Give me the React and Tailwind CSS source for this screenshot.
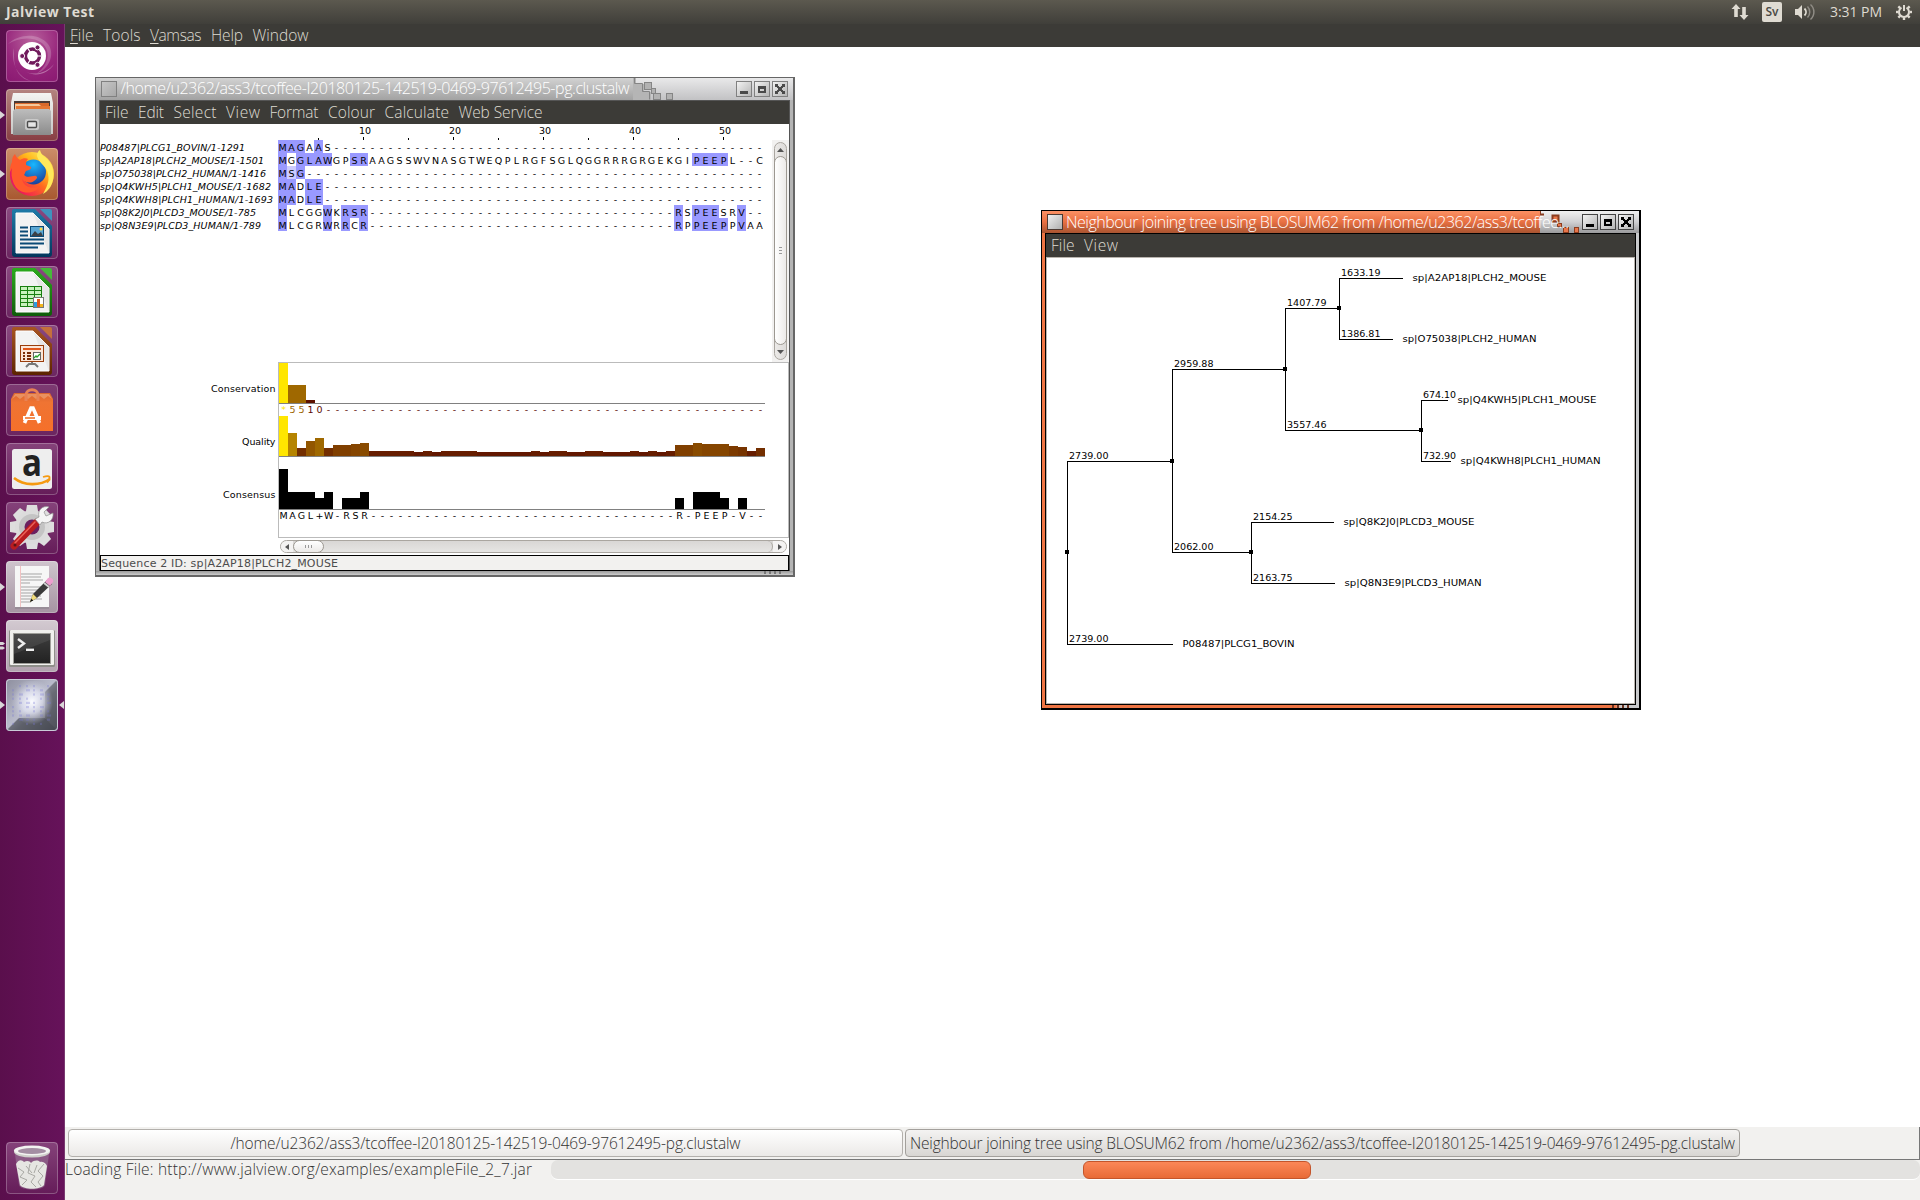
import React, { useLayoutEffect, useRef, useState } from "react";

/* Text spread evenly over a fixed width. */
function Fit({ w, className = "", children }) {
  const ref = useRef(null);
  const [ls, setLs] = useState(0);
  useLayoutEffect(() => {
    const el = ref.current;
    const n = el.textContent.length;
    const natural = el.getBoundingClientRect().width - ls * n;
    setLs((w - natural) / (n - 1 || 1));
  }, [w]);
  return (
    <span className={`block shrink-0 whitespace-pre ${className}`} style={{ width: w }}>
      <span ref={ref} className="inline-block" style={{ letterSpacing: ls }}>
        {children}
      </span>
    </span>
  );
}

const UI = "font-['Open_Sans','Noto_Sans',sans-serif]";
const DV = "font-['DejaVu_Sans',sans-serif]";

/* ---------- launcher ---------- */

function Dash() {
  return (
    <>
      <defs>
        <radialGradient id="dash" cx="0.5" cy="0.2" r="0.9">
          <stop offset="0" stopColor="#b8619c" />
          <stop offset="0.6" stopColor="#97267c" />
          <stop offset="1" stopColor="#8b1a72" />
        </radialGradient>
      </defs>
      <rect x="0.5" y="0.5" width="51" height="51" rx="3" fill="url(#dash)" />
      <path d="M2 14C12 4 32 2 42 14C50 25 42 40 30 44C42 36 46 22 36 13C26 6 12 8 2 14Z" fill="#fff" opacity="0.2" />
      <path d="M8 18C4 32 12 48 26 51C14 50 8 40 8 26Z" fill="#fff" opacity="0.22" />
      <path d="M48 34C42 44 30 47 20 42C30 46 42 42 48 34Z" fill="#fff" opacity="0.35" />
      <circle cx="26" cy="26" r="14" fill="#fff" />
      <circle cx="26.5" cy="26" r="7" fill="none" stroke="#701a5c" strokeWidth="3.4" />
      <path d="M26.5 26L35 26M26.5 26L22 18.5M26.5 26L22 33.5" stroke="#fff" strokeWidth="1.2" />
      <circle cx="26.5" cy="26" r="4.8" fill="#fff" />
      <g fill="#701a5c" stroke="#fff" strokeWidth="0.9">
        <circle cx="16.2" cy="26" r="2.5" />
        <circle cx="31.5" cy="17.4" r="2.5" />
        <circle cx="31.5" cy="34.8" r="2.5" />
      </g>
    </>
  );
}

function Files() {
  return (
    <>
      <defs>
        <linearGradient id="cab" x1="0" y1="0" x2="0" y2="1">
          <stop offset="0" stopColor="#bdbdbd" />
          <stop offset="1" stopColor="#8b8b8b" />
        </linearGradient>
        <linearGradient id="cabTop" x1="0" y1="0" x2="0" y2="1">
          <stop offset="0" stopColor="#f4f4f2" />
          <stop offset="1" stopColor="#c6c6c4" />
        </linearGradient>
      </defs>
      <path d="M7 4h38l2 10v31H5V14z" fill="url(#cabTop)" />
      <path d="M8 12h36v10H8z" fill="#4b3a35" />
      <path d="M9 14h34v8H9z" fill="#d9692c" />
      <path d="M9 15h24l2 2h8v5H9z" fill="#f6c89b" />
      <path d="M10 17h34v5H10z" fill="#e57835" />
      <path d="M7 22L9 20h34l2 2v24H7z" fill="url(#cab)" />
      <rect x="19" y="30" width="14" height="11" rx="2" fill="#c9c9c9" />
      <rect x="21.5" y="32.5" width="9" height="6" rx="1" fill="#e5e5e5" stroke="#4c4c4c" strokeWidth="1.4" />
    </>
  );
}

function Firefox() {
  return (
    <>
      <defs>
        <linearGradient id="fox" x1="0.9" y1="0" x2="0.15" y2="0.9">
          <stop offset="0" stopColor="#fff36a" />
          <stop offset="0.35" stopColor="#ffb81c" />
          <stop offset="0.6" stopColor="#ff6a1f" />
          <stop offset="1" stopColor="#f0155a" />
        </linearGradient>
        <radialGradient id="globe" cx="0.5" cy="0.2" r="0.8">
          <stop offset="0" stopColor="#18b8ff" />
          <stop offset="1" stopColor="#1c3f9b" />
        </radialGradient>
      </defs>
      <circle cx="26" cy="26" r="22" fill="url(#fox)" />
      <circle cx="27.5" cy="24" r="12.5" fill="url(#globe)" />
      <path d="M31 8C31 5 32 3 34 2C35 8 41 9 45 16C50 26 48 40 37 46C40 40 44 34 42 26C41 18 33 16 31 8Z" fill="#ffe95a" />
      <path d="M6 14C6 10 7 8 9 6C10 9 12 11 14 12C17 10 20 10 22 11C20 13 20 15 20 17L25 19C25 21 24 22 20 23C19 24 19 26 18 27C22 31 27 27 30 28C32 29 31 31 28 33C24 36 18 34 16 31C17 38 25 42 34 38C30 46 14 48 7 36C3 28 3 20 6 14Z" fill="#ff5a2c" />
      <path d="M6 20C4 30 8 42 20 47C9 44 3 34 4 24Z" fill="#e41b62" />
    </>
  );
}

function OfficeDoc({ dark, main, light, id, children }) {
  return (
    <>
      <defs>
        <linearGradient id={id} x1="0" y1="0" x2="0" y2="1">
          <stop offset="0" stopColor={main} />
          <stop offset="1" stopColor={dark} />
        </linearGradient>
      </defs>
      <path d="M8 2H29L46 19V47a3 3 0 0 1-3 3H9a3 3 0 0 1-3-3V4a2 2 0 0 1 2-2z" fill={`url(#${id})`} />
      <path d="M34 2H44a2 2 0 0 1 2 2V14z" fill={light} />
      <path d="M10 6H27L43 22V46H10z" fill="#f3f3f3" stroke="#fff" strokeWidth="1" />
      <path d="M27 6L43 22V46L36 28z" fill="#dfdfdf" opacity="0.6" />
      {children}
    </>
  );
}

function Writer() {
  return (
    <OfficeDoc id="wr" main="#1f7ba8" dark="#02365c" light="#3f93bd">
      <path d="M14 20.5h8M14 24.5h8M14 28.5h8M14 32.5h24M14 36.5h24M14 40.5h18" stroke="#0b4a76" strokeWidth="2" />
      <rect x="24.5" y="19.5" width="13" height="10" fill="#5aa7d4" stroke="#0b4a76" />
      <path d="M25 29L29 24L32 27L35 25L37 29z" fill="#3b4046" />
      <circle cx="35" cy="22" r="1.5" fill="#ffd640" />
    </OfficeDoc>
  );
}

function Calc() {
  return (
    <OfficeDoc id="ca" main="#2cab1d" dark="#0f5c0a" light="#46b93a">
      <rect x="14.5" y="20.5" width="21" height="20" fill="#c8f2bd" stroke="#187f10" />
      <path d="M14 24.5h22M14 28.5h22M14 32.5h22M14 36.5h22M21.5 20v21M28.5 20v21" stroke="#187f10" />
      <rect x="27.5" y="31.5" width="10" height="10" fill="#fff" stroke="#777" />
      <path d="M28 36h3v5h-3z" fill="#2d9be0" />
      <path d="M31 33h3v8h-3z" fill="#e0571b" />
      <path d="M34 38h3v3h-3z" fill="#f2b51c" />
    </OfficeDoc>
  );
}

function Impress() {
  return (
    <OfficeDoc id="im" main="#a85522" dark="#5c2400" light="#c4703c">
      <rect x="14.5" y="20.5" width="23" height="16" fill="#fbe6d8" stroke="#9a3e0c" />
      <path d="M17 24h18" stroke="#e0571b" strokeWidth="2" />
      <path d="M17 28h2M17 31h2M17 34h2M21 28h4M21 31h4M21 34h4" stroke="#7a2e08" strokeWidth="2" />
      <rect x="27.5" y="27.5" width="7" height="7" fill="#fff" stroke="#666" />
      <path d="M28 33l2-2 1 1 3-3" stroke="#2ba02b" fill="none" strokeWidth="1.3" />
      <path d="M26 37v2M20 42l3-3h6l3 3" stroke="#777" fill="none" strokeWidth="2" />
    </OfficeDoc>
  );
}

function Software() {
  return (
    <>
      <defs>
        <linearGradient id="bag" x1="0" y1="0" x2="0" y2="1">
          <stop offset="0" stopColor="#d9662f" />
          <stop offset="0.25" stopColor="#ef7433" />
          <stop offset="1" stopColor="#f5702a" />
        </linearGradient>
      </defs>
      <path d="M8 9h36l3 6v32H5V15z" fill="url(#bag)" />
      <path d="M6 15L9 10h34l3 5-4-3-4 3-4-3-4 3-4-3-4 3-4-3-4 3-4-3z" fill="#e9915f" />
      <path d="M20 17v-6c0-7 12-7 12 0v6" fill="none" stroke="#e88255" strokeWidth="3" />
      <path d="M18.5 39L25 24h2L33.500 39" fill="none" stroke="#fff" strokeWidth="3.6" />
      <path d="M17 34h18" stroke="#fff" strokeWidth="4" />
      <path d="M19 34h10" stroke="#f0762f" strokeWidth="1.6" />
    </>
  );
}

function Amazon() {
  return (
    <>
      <rect x="6" y="6" width="40" height="40" rx="2.5" fill="#eeeeee" />
      <text x="26" y="33" textAnchor="middle" fontSize="37" fontWeight="700" fontFamily="Open Sans, sans-serif" fill="#222" textLength="20" lengthAdjust="spacingAndGlyphs">
        a
      </text>
      <path d="M8 35C18 43 34 43 44 36" fill="none" stroke="#f59a12" strokeWidth="2.6" />
      <path d="M37 34c3-1 6-1 6.5 0 0.5 1.5-1 4-2.5 5.5" fill="none" stroke="#f59a12" strokeWidth="1.8" />
    </>
  );
}

function Settings() {
  return (
    <>
      <g transform="translate(26 25)">
        {[0, 45, 90, 135].map((a) => (
          <path key={a} d="M-5 -22h10l1 6v32l-1 6h-10l-1-6v-32z" fill="#dedede" transform={`rotate(${a})`} />
        ))}
        <circle r="17" fill="#dcdcdc" />
        <circle r="13" fill="#c4c4c4" />
        <circle r="7.5" fill="#6b2160" />
      </g>
      <path d="M8 44L31 20" stroke="#b81c20" strokeWidth="7" strokeLinecap="round" />
      <path d="M9 41L29 20" stroke="#ea6258" strokeWidth="1.5" strokeLinecap="round" />
      <path d="M29 17L33 15C31 8 37 3 43 5L38 10L40 14L47 11C48 18 42 23 36 20L34 23z" fill="#f5f5f5" stroke="#8f8f8f" strokeWidth="0.7" />
      <circle cx="9" cy="43" r="1.5" fill="#5b1414" />
    </>
  );
}

function Editor() {
  return (
    <>
      <rect x="9" y="7" width="34" height="41" fill="#8e868d" opacity="0.6" />
      <rect x="9" y="5" width="34" height="41" fill="#f6f6f6" />
      <path d="M14.5 5v41" stroke="#f0b5b5" strokeWidth="0.8" />
      <path d="M15 13h21M15 16h20M15 19h22M15 22h9M15 26h22M15 29h21M15 32h18M15 35h20M15 38h21M15 41h10" stroke="#a5a5a5" strokeWidth="1" />
      <path d="M24 41L27 33L41 19L46 23L31 37z" fill="#3a3a3a" />
      <path d="M24 41L27 33L31 37z" fill="#f0dc7a" />
      <path d="M24 41L25.3 37.8L27.3 39.5z" fill="#111" />
      <path d="M39 21L42 17C45 16 48 18 47 21L44 25z" fill="#ee9fd0" />
      <path d="M38 22L43 26" stroke="#cfcfcf" strokeWidth="2" />
    </>
  );
}

function Terminal() {
  return (
    <>
      <defs>
        <linearGradient id="scr" x1="0" y1="0" x2="0" y2="1">
          <stop offset="0" stopColor="#3e3e3e" />
          <stop offset="1" stopColor="#222222" />
        </linearGradient>
      </defs>
      <rect x="3" y="10" width="46" height="37" rx="1.5" fill="#8f8f8a" />
      <rect x="4" y="10" width="44" height="35" rx="1" fill="#f1f1ee" />
      <rect x="7" y="13" width="38" height="31" fill="#9e9e99" />
      <rect x="8" y="14" width="36" height="29" fill="url(#scr)" />
      <path d="M8 14h36v6L8 34z" fill="#fff" opacity="0.08" />
      <path d="M12 19l6 4.5l-6 4.5" fill="none" stroke="#eee" strokeWidth="2.4" />
      <path d="M20 29.8h8" stroke="#eee" strokeWidth="2.4" />
    </>
  );
}

function Jalview() {
  const marks = [];
  for (let r = 0; r < 10; r++)
    for (let c = 0; c < 6; c++) if ((r * 5 + c * 7) % 4 !== 0) marks.push([6 + c * 7, 6 + r * 4.2, (r * c) % 3]);
  return (
    <>
      <defs>
        <linearGradient id="jvBase" x1="0" y1="0" x2="1" y2="1">
          <stop offset="0" stopColor="#8f90a0" />
          <stop offset="0.48" stopColor="#b9bbcb" />
          <stop offset="0.6" stopColor="#8b8c98" />
          <stop offset="1" stopColor="#50525c" />
        </linearGradient>
        <radialGradient id="jv" cx="0.5" cy="0.45" r="0.5">
          <stop offset="0" stopColor="#fbfcff" />
          <stop offset="0.5" stopColor="#e4e6f5" stopOpacity="0.75" />
          <stop offset="1" stopColor="#c5c8da" stopOpacity="0" />
        </radialGradient>
      </defs>
      <rect x="1" y="1" width="50" height="50" rx="2" fill="url(#jvBase)" />
      <path d="M51 1V51L39 39V13z" fill="#4c4e58" opacity="0.55" />
      <path d="M1 51H51L39 39H13z" fill="#3f434b" opacity="0.6" />
      <rect x="5" y="2" width="42" height="46" fill="url(#jv)" />
      {marks.map(([x, y, k], i) => (
        <rect key={i} x={x} y={y} width={2 + k} height="2.2" fill="#7676d4" opacity="0.3" />
      ))}
      <rect x="0.5" y="0.5" width="51" height="51" rx="3" fill="none" stroke="#b9bacb" />
    </>
  );
}

function Trash() {
  return (
    <>
      <path d="M9 12L13 43C14 49 38 49 39 43L43 12z" fill="#9a7a99" opacity="0.55" />
      <path d="M10 22c3-5 6-4 8-2 3-2 6-1 7 1 3-3 7-3 9-1 4-1 6 2 7 4l-3 19c-4 5-20 5-24 0z" fill="#e6e6e2" />
      <path d="M12 26l6 4-4 5 7 3-5 5M24 22l-2 9 7 3-4 6 5 5M38 22l-6 7 5 5-5 6 3 4M20 24l6 7M31 23l-3 8" stroke="#a9a9a4" fill="none" strokeWidth="1" />
      <ellipse cx="26" cy="10" rx="18" ry="5.5" fill="#cfcfcb" />
      <ellipse cx="26" cy="8.5" rx="18" ry="5" fill="#f3f3f1" />
      <ellipse cx="26" cy="9" rx="14" ry="3" fill="#a48ea3" />
    </>
  );
}

const LAUNCH = [
  { I: Dash, bg: "bg-[#8f2178]" },
  { I: Files, bg: "bg-linear-to-b from-[#b48480] to-[#873d43]", left: 1 },
  { I: Firefox, bg: "bg-linear-to-b from-[#cb8d69] to-[#a8582f]", left: 1 },
  { I: Writer, bg: "bg-linear-to-b from-[#8a4a80] to-[#6b2560]" },
  { I: Calc, bg: "bg-linear-to-b from-[#8a4a80] to-[#6b2560]" },
  { I: Impress, bg: "bg-linear-to-b from-[#8a4a80] to-[#6b2560]" },
  { I: Software, bg: "bg-linear-to-b from-[#7d3a72] to-[#6b2560]" },
  { I: Amazon, bg: "bg-linear-to-b from-[#85427a] to-[#651c59]" },
  { I: Settings, bg: "bg-linear-to-b from-[#85427a] to-[#651c59]" },
  { I: Editor, bg: "bg-linear-to-b from-[#cfc4cd] to-[#a594a2]", left: 1 },
  { I: Terminal, bg: "bg-linear-to-b from-[#d3cad1] to-[#b1a2ae]", left: 2 },
  { I: Jalview, bg: "bg-[#8c8ea0]", left: 1, right: 1 },
];

function Tile({ I, bg, left, right }) {
  return (
    <div className={`relative h-[52px] w-[52px] rounded-[4px] ${bg}`}>
      <svg className="absolute inset-0 overflow-visible" width="52" height="52" viewBox="0 0 52 52">
        <I />
      </svg>
      <div className="absolute inset-0 rounded-[4px] border border-white/25" />
      {left === 1 && (
        <svg className="absolute top-[22px] left-[-6px]" width="5" height="8">
          <path d="M0 0L5 4L0 8z" fill="#d9d6d8" />
        </svg>
      )}
      {left === 2 && (
        <svg className="absolute top-[22px] left-[-6px]" width="5" height="8">
          <path d="M0 0h3l2 1.500L3 3H0zM0 4.500h3l2 1.500L3 7.500H0z" fill="#d9d6d8" />
        </svg>
      )}
      {right === 1 && (
        <svg className="absolute top-[22px] left-[53px]" width="5" height="8">
          <path d="M5 0L0 4L5 8z" fill="#d9d6d8" />
        </svg>
      )}
    </div>
  );
}

/* ---------- window parts ---------- */

function MenuItems({ items }) {
  return (
    <div className={`flex gap-[9.5px] text-[15.5px] leading-[20px] font-light text-[#dfdbd2] ${UI}`}>
      {items.map(([t, w, u]) => (
        <Fit key={t} w={w}>
          {u ? (
            <>
              <span className="underline decoration-1 underline-offset-[2px]">{t[0]}</span>
              {t.slice(1)}
            </>
          ) : (
            t
          )}
        </Fit>
      ))}
    </div>
  );
}

function WinButtons({ active }) {
  const ink = active ? "#000" : "#4a4a4a";
  const glyphs = [
    <rect key="a" x="4" y="10" width="8" height="3" fill={ink} />,
    <path key="b" d="M4 5h8v7H4zM6 8v2h4V8z" fill={ink} fillRule="evenodd" />,
    <path key="c" d="M3 3h3v2h1v1h2V5h1V3h3v3h-2v1h-1v2h1v1h2v3h-3v-2H9v-1H7v1H6v2H3v-3h2V9h1V7H5V6H3z" fill={ink} />,
  ];
  return (
    <div className="flex gap-[2px]">
      {glyphs.map((g, i) => (
        <div
          key={i}
          className={`h-4 w-4 border bg-linear-to-br from-[#f2f2f2] to-[#b5b5b5] ${active ? "border-[#444]" : "border-[#808080]"}`}
        >
          <svg className="-mt-px -ml-px" width="16" height="16">
            {g}
          </svg>
        </div>
      ))}
    </div>
  );
}

/* ---------- alignment ---------- */

const rep = (n) => "-".repeat(n);
const SEQS = [
  ["P08487|PLCG1_BOVIN/1-1291", 145, "MAGAAS" + rep(48), [0, 1, 2, 4]],
  ["sp|A2AP18|PLCH2_MOUSE/1-1501", 164, "MGGLAWGPSRAAGSSWVNASGTWEQPLRGFSGLQGGRRRGRGEKGIPEEPL--C", [0, 2, 3, 4, 5, 8, 9, 46, 47, 48, 49]],
  ["sp|O75038|PLCH2_HUMAN/1-1416", 166, "MSG" + rep(51), [0, 2]],
  ["sp|Q4KWH5|PLCH1_MOUSE/1-1682", 171, "MADLE" + rep(49), [0, 1, 3, 4]],
  ["sp|Q4KWH8|PLCH1_HUMAN/1-1693", 173, "MADLE" + rep(49), [0, 1, 3, 4]],
  ["sp|Q8K2J0|PLCD3_MOUSE/1-785", 156, "MLCGGWKRSR" + rep(34) + "RSPEESRV--", [0, 5, 7, 8, 9, 44, 46, 47, 48, 51]],
  ["sp|Q8N3E9|PLCD3_HUMAN/1-789", 161, "MLCGRWRRCR" + rep(34) + "RPPEEPPVAA", [0, 5, 7, 9, 44, 46, 47, 48, 49, 51]],
];

function Residues({ seq, marked = [], soft = -1, color, lead = "leading-[16px]" }) {
  return (
    <div className="flex">
      {[...seq].map((ch, i) => (
        <span
          key={i}
          className={`block h-[13px] w-[9px] text-center text-[9.5px] ${lead} ${
            marked.includes(i) ? "bg-[#9999ff]" : i === soft ? "bg-[#ccccff]" : ""
          }`}
          style={color ? { color: color(i) } : undefined}
        >
          {ch}
        </span>
      ))}
    </div>
  );
}

const heat = (h) => {
  const f = h / 40;
  return `rgb(${Math.round(80 + 175 * f)},${Math.round(230 * f)},0)`;
};
const CONS = [40, 18, 18, 3];
const QUAL = [
  40, 23, 8, 15, 18, 8, 11, 11, 12, 13, 5, 5, 5, 5, 5, 4, 5, 4, 5, 5, 5, 5, 4, 4, 4, 4, 4, 4, 5, 4, 5, 5, 4, 4, 5, 5, 4, 4, 4, 5, 4, 5, 4, 5,
  11, 11, 13, 12, 12, 12, 10, 9, 5, 8,
];
const OCC = [40, 17, 17, 17, 11, 17, 0, 11, 11, 17, ...Array(34).fill(0), 11, 0, 17, 17, 17, 11, 0, 11, 0, 0];

function Bars({ data, mono }) {
  return (
    <div className="flex h-[41px] w-[486px] items-end border-b border-[#808080]">
      {data.map((h, i) => (
        <div key={i} className="w-[9px]" style={{ height: h, backgroundColor: mono ? "#000" : heat(h) }} />
      ))}
    </div>
  );
}

function AlignmentWindow() {
  return (
    <div className="absolute top-[30px] left-[30px] flex h-[500px] w-[700px] flex-col border-t border-r-2 border-b-2 border-l border-[#666] bg-[#b4b4b4]">
      <div className="relative flex h-[22px] shrink-0 items-center bg-linear-to-b from-[#d2d2d2] to-[#a2a2a2] pr-[5px] pl-[5px]">
        <div className="absolute top-0 right-0 h-[22px] w-[160px] bg-linear-to-b from-[#e9e9ea] to-[#c2c2c4]" />
        <svg className="absolute top-0 left-[537px]" width="48" height="22">
          <path d="M0 0v22h18v-8h-7V6H3V0z" fill="#b5b5b5" />
          <g fill="#b2b2b2" stroke="#858585">
            <path d="M1.500 0v5.500h8v8h7v8" fill="none" />
            <rect x="11.500" y="4.500" width="7" height="7" />
            <rect x="18.500" y="10.500" width="4" height="5" />
            <rect x="20.500" y="15.500" width="7" height="6" />
            <rect x="33.500" y="15.500" width="6" height="6" />
          </g>
        </svg>
        <div className="h-4 w-4 border border-[#808080] bg-linear-to-br from-[#c6c6c6] to-[#a8a8a8]" />
        <Fit w={509} className={`relative -top-px ml-[3.500px] text-[16px] leading-[20px] font-light text-white ${UI}`}>
          /home/u2362/ass3/tcoffee-I20180125-142519-0469-97612495-pg.clustalw
        </Fit>
        <div className="relative ml-auto">
          <WinButtons />
        </div>
      </div>
      <div className="mr-[3px] ml-[3px] flex min-h-0 flex-1 flex-col border-t border-r border-l border-[#555] bg-white">
        <div className="flex h-[23px] shrink-0 items-center bg-[#3c3b37] pb-[2px] pl-[5px]">
          <MenuItems
            items={[
              ["File", 23.5],
              ["Edit", 26],
              ["Select", 43],
              ["View", 34],
              ["Format", 49],
              ["Colour", 47],
              ["Calculate", 64.5],
              ["Web Service", 84],
            ]}
          />
        </div>
        <div className={`flex min-h-0 flex-1 flex-col text-black ${DV}`}>
          {/* ruler */}
          <div className="flex h-[16px] shrink-0 pl-[178px] text-[9.500px] leading-[13px]">
            {Array.from({ length: 54 }, (_, i) => (
              <div key={i} className="flex w-[9px] flex-col justify-between">
                <span className="h-[12px] w-0 whitespace-nowrap">{(i + 1) % 10 === 0 ? i + 1 : ""}</span>
                {(i + 1) % 5 === 0 && <span className={`ml-[4px] w-px bg-black ${(i + 1) % 10 === 0 ? "h-[3px]" : "h-[2px]"}`} />}
              </div>
            ))}
          </div>
          <div className="flex h-[222px] shrink-0">
            <div className="w-[178px] italic">
              {SEQS.map(([id, w]) => (
                <Fit key={id} w={w} className="h-[13px] text-[9.500px] leading-[16px]">
                  {id}
                </Fit>
              ))}
            </div>
            <div>
              {SEQS.map(([id, , seq, marked], r) => (
                <Residues key={id} seq={seq} marked={marked} soft={r === 2 ? 1 : -1} />
              ))}
            </div>
            <div className="ml-auto w-[17px] bg-[#f2f1f0] px-[2px] pt-[2px]">
              <div className="flex h-[218px] flex-col rounded-[7px] border border-[#aaa6a0] bg-linear-to-r from-[#eceae8] to-[#dddbd9]">
                <div className="flex h-[13px] items-center justify-center">
                  <svg width="7" height="4">
                    <path d="M3.500 0L7 4H0z" fill="#555" />
                  </svg>
                </div>
                <div className="-mx-px flex flex-1 flex-col items-center justify-center gap-[2px] rounded-[7px] border border-[#9c9891] bg-linear-to-r from-white to-[#eceae8]">
                  <span className="h-px w-[3px] bg-[#999]" />
                  <span className="h-px w-[3px] bg-[#999]" />
                  <span className="h-px w-[3px] bg-[#999]" />
                </div>
                <div className="flex h-[14px] items-center justify-center">
                  <svg width="7" height="4">
                    <path d="M0 0H7L3.500 4z" fill="#555" />
                  </svg>
                </div>
              </div>
            </div>
          </div>
          {/* annotation */}
          <div className="flex h-[176px] shrink-0">
            <div className="flex w-[178px] flex-col items-end pr-[2.500px] text-[9.500px] leading-[12px]">
              <Fit w={64.5} className="mt-[21px] h-[53px]">Conservation</Fit>
              <Fit w={33.5} className="h-[53px]">Quality</Fit>
              <Fit w={52.5}>Consensus</Fit>
            </div>
            <div className="w-[511px] border border-[#bbb]">
              <Bars data={CONS} />
              <div className="h-[12px]">
                <Residues
                  seq={"*5510" + rep(49)}
                  lead="leading-[12px]"
                  color={(i) => (i === 0 ? "#ffe600" : i < 3 ? "#9d6600" : "#5a0a00")}
                />
              </div>
              <Bars data={QUAL} />
              <div className="h-[12px]" />
              <Bars data={OCC} mono />
              <Residues seq={"MAGL+W-RSR" + rep(34) + "R-PEEP-V--"} lead="leading-[12px]" />
            </div>
          </div>
          <div className="flex h-[17px] shrink-0 pt-[2px] pl-[180px]">
            <div className="flex h-[13px] w-[507px] rounded-[7px] border border-[#aaa6a0] bg-linear-to-b from-[#d9d7d5] to-[#e6e5e3]">
              <div className="flex w-[12px] items-center justify-center rounded-l-[7px] bg-[#f4f3f2]">
                <svg width="4" height="6">
                  <path d="M4 0V6L0 3z" fill="#555" />
                </svg>
              </div>
              <div className="-my-px flex w-[31px] items-center justify-center gap-[2px] rounded-[7px] border border-[#9c9891] bg-linear-to-b from-white to-[#eceae8]">
                <span className="h-[3px] w-px bg-[#999]" />
                <span className="h-[3px] w-px bg-[#999]" />
                <span className="h-[3px] w-px bg-[#999]" />
              </div>
              <div className="flex-1 rounded-r-[7px] border-r border-[#aaa6a0]" />
              <div className="flex w-[13px] items-center justify-center rounded-r-[7px] bg-[#f4f3f2]">
                <svg width="4" height="6">
                  <path d="M0 0V6L4 3z" fill="#555" />
                </svg>
              </div>
            </div>
          </div>
          <div className="flex h-[16px] shrink-0 items-center border border-black bg-[#f2f1ef] pt-[2px] text-[11px] leading-[12px] text-[#4c4c4c]">
            <Fit w={237}>Sequence 2 ID: sp|A2AP18|PLCH2_MOUSE</Fit>
          </div>
        </div>
      </div>
      <div className="flex h-[4px] shrink-0 justify-end gap-[3px] bg-linear-to-b from-[#999] to-[#ccc] pr-[12px]">
        {[0, 1, 2, 3].map((i) => (
          <span key={i} className="h-[3px] w-[2px] bg-[#777]" />
        ))}
      </div>
    </div>
  );
}

/* ---------- tree ---------- */

const BRANCHES = [
  [1067, 461, 1172, "2739.00"],
  [1067, 644, 1172, "2739.00"],
  [1172, 369, 1285, "2959.88"],
  [1172, 552, 1251, "2062.00"],
  [1285, 308, 1339, "1407.79"],
  [1285, 430, 1421, "3557.46"],
  [1339, 278, 1402, "1633.19"],
  [1339, 339, 1392, "1386.81"],
  [1421, 400, 1447, "674.10"],
  [1421, 461, 1450, "732.90"],
  [1251, 522, 1333, "2154.25"],
  [1251, 583, 1334, "2163.75"],
];
const STEMS = [
  [1067, 461, 644, 552],
  [1172, 369, 552, 461],
  [1285, 308, 430, 369],
  [1339, 278, 339, 308],
  [1421, 400, 461, 430],
  [1251, 522, 583, 552],
];
const LEAVES = [
  [1412.5, 281, 134, "sp|A2AP18|PLCH2_MOUSE"],
  [1402.5, 342, 134, "sp|O75038|PLCH2_HUMAN"],
  [1457.5, 403, 139, "sp|Q4KWH5|PLCH1_MOUSE"],
  [1460.5, 464, 140, "sp|Q4KWH8|PLCH1_HUMAN"],
  [1343.5, 525, 131, "sp|Q8K2J0|PLCD3_MOUSE"],
  [1344.5, 586, 137, "sp|Q8N3E9|PLCD3_HUMAN"],
  [1182.5, 647, 112, "P08487|PLCG1_BOVIN"],
];

function Tree() {
  return (
    <svg className="block" width="587" height="446" viewBox="1047 258 587 446" fontFamily="DejaVu Sans, sans-serif" fontSize="9.2">
      <g stroke="#000" strokeWidth="1" shapeRendering="crispEdges">
        {BRANCHES.map(([x, y, x2], i) => (
          <path key={i} d={`M${x} ${y + 0.5}H${x2 + 1}`} />
        ))}
        {STEMS.map(([x, y, y2], i) => (
          <path key={i} d={`M${x + 0.5} ${y}V${y2 + 1}`} />
        ))}
      </g>
      {STEMS.map(([x, , , n], i) => (
        <rect key={i} x={x - 2} y={n - 2} width="4" height="4" />
      ))}
      {BRANCHES.map(([x, y, , t], i) => (
        <text key={i} x={x + 2} y={y - 2} textLength={t.length === 7 ? 39.5 : 33} lengthAdjust="spacingAndGlyphs">
          {t}
        </text>
      ))}
      {LEAVES.map(([x, y, w, t], i) => (
        <text key={i} x={x} y={y} textLength={w} lengthAdjust="spacingAndGlyphs">
          {t}
        </text>
      ))}
    </svg>
  );
}

function TreeWindow() {
  return (
    <div className="absolute top-[163px] left-[976px] flex h-[500px] w-[600px] flex-col border-t border-r-2 border-b-2 border-l border-black bg-linear-to-r from-[#ee7443] from-80% to-[#c9cacc] to-95%">
      <div className="relative flex h-[22px] shrink-0 items-center bg-linear-to-b from-[#fb9063] via-[#e87042] to-[#a95431] pr-[5px] pl-[5px]">
        <div className="absolute top-0 right-0 h-[22px] w-[99px] bg-linear-to-b from-[#f0f0f0] via-[#d0d0d2] to-[#9a9a9c]" />
        <svg className="absolute top-0 left-[498px]" width="42" height="22">
          <g fill="#e8764a" stroke="#8a3d20">
            <path d="M0 0v3.500h4" fill="none" strokeWidth="2" />
            <rect x="12.500" y="4.500" width="6" height="6" strokeWidth="2" />
            <rect x="17.500" y="12.500" width="4" height="3" />
            <rect x="23.500" y="16.500" width="5" height="5" />
            <rect x="34.500" y="16.500" width="4" height="5" />
          </g>
        </svg>
        <div className="h-4 w-4 border border-[#4c3a33] bg-linear-to-br from-[#f0f0f0] to-[#b0b0b0]" />
        <Fit w={503} className={`relative ml-[3px] text-[16px] leading-[20px] font-light text-white ${UI}`}>
          Neighbour joining tree using BLOSUM62 from /home/u2362/ass3/tcoffee...
        </Fit>
        <div className="relative ml-auto">
          <WinButtons active />
        </div>
      </div>
      <div className="mr-[3px] ml-[3px] flex min-h-0 flex-1 flex-col border border-black bg-white">
        <div className="flex h-[23px] shrink-0 items-center bg-[#3c3b37] pb-[2px] pl-[5px]">
          <MenuItems
            items={[
              ["File", 23.5],
              ["View", 34],
            ]}
          />
        </div>
        <div className="min-h-0 flex-1 overflow-hidden border border-[#b9b4ae]">
          <Tree />
        </div>
      </div>
      <div className="flex h-[3px] shrink-0 justify-end gap-[3px] bg-linear-to-r from-[#ee7443] from-96% to-[#c9cacc] to-97% pr-[10px]">
        {[0, 1, 2, 3].map((i) => (
          <span key={i} className="h-[3px] w-[2px] bg-[#6b3320]" />
        ))}
      </div>
    </div>
  );
}

/* ---------- desktop ---------- */

function Indicators() {
  return (
    <div className="ml-auto flex items-center pr-[8px]">
      <svg width="18" height="18" viewBox="0 0 18 18">
        <path d="M5 1L9.500 6H6.800v8H3.200V6H0.500zM13 17L8.500 12h2.700V4h3.600v8h2.700z" fill="#dfdbd2" />
      </svg>
      <div className={`ml-[13px] flex h-[20px] w-[20px] items-center justify-center rounded-[2px] bg-[#dfdbd2] text-[12px] font-semibold text-[#4a4943] ${UI}`}>Sv</div>
      <svg className="ml-[13px]" width="20" height="18" viewBox="0 0 20 18">
        <path d="M0 6h3l4-4v14l-4-4H0z" fill="#dfdbd2" />
        <path d="M9.500 5.500c2 2 2 5 0 7" fill="none" stroke="#dfdbd2" strokeWidth="1.8" />
        <path d="M12.500 3.500c3 3 3 8 0 11M15.500 1.500c4.500 4 4.500 11 0 15" fill="none" stroke="#8f8c85" strokeWidth="1.5" />
      </svg>
      <Fit w={52} className={`ml-[15px] text-[14px] leading-[20px] text-[#dfdbd2] ${UI}`}>3:31 PM</Fit>
      <svg className="ml-[14px]" width="16" height="16" viewBox="-8 -8 16 16">
        <g stroke="#dfdbd2" fill="none">
          <path d="M2.500 -4.300A5 5 0 1 1 -2.500 -4.300" strokeWidth="2" />
          <path d="M0 -7V-1" strokeWidth="2" />
          {[45, 90, 135, 180, 225, 270, 315].map((a) => (
            <path key={a} d="M0 -5.500V-8" strokeWidth="2.4" transform={`rotate(${a})`} />
          ))}
        </g>
      </svg>
    </div>
  );
}

export default function App() {
  return (
    <div className="flex h-[1200px] w-[1920px] flex-col overflow-hidden bg-white">
      <header className="flex h-[24px] shrink-0 items-center bg-linear-to-b from-[#5c594f] to-[#403f3a] pl-[6px]">
        <Fit w={88} className={`text-[14px] leading-[22px] font-bold text-[#dfdbd2] ${UI}`}>Jalview Test</Fit>
        <Indicators />
      </header>
      <div className="flex min-h-0 flex-1">
        <nav className="flex w-[65px] shrink-0 flex-col gap-[7px] border-r border-[#793a70] bg-linear-to-r from-[#5a0f4c] to-[#66125a] px-[6px] py-[6px]">
          {LAUNCH.map((t, i) => (
            <Tile key={i} {...t} />
          ))}
          <div className="mt-auto">
            <Tile I={Trash} bg="bg-linear-to-b from-[#85427a] to-[#651c59]" />
          </div>
        </nav>
        <main className="flex min-w-0 flex-1 flex-col">
          <div className="flex h-[23px] shrink-0 items-center bg-[#3c3b37] pb-[2px] pl-[5px]">
            <MenuItems
              items={[
                ["File", 23.5, true],
                ["Tools", 37.5],
                ["Vamsas", 51.5, true],
                ["Help", 32],
                ["Window", 56],
              ]}
            />
          </div>
          <div className="relative min-h-0 flex-1 bg-white">
            <AlignmentWindow />
            <TreeWindow />
          </div>
          <div className="flex h-[33px] shrink-0 gap-[2px] border-r border-b border-[#777] bg-[#f2f1ef] pt-[2px] pl-[3px]">
            <div className="flex h-[28px] w-[835px] items-center justify-center rounded-[4px] border border-[#b3b0ac] bg-linear-to-b from-white to-[#ebe9e7]">
              <Fit w={510} className={`text-[15.5px] leading-[22px] font-light text-[#333] ${UI}`}>
                /home/u2362/ass3/tcoffee-I20180125-142519-0469-97612495-pg.clustalw
              </Fit>
            </div>
            <div className="flex h-[28px] w-[835px] items-center justify-center rounded-[4px] border border-[#a3a09c] bg-linear-to-b from-[#f4f3f2] to-[#d8d6d3]">
              <Fit w={825} className={`text-[15.5px] leading-[22px] font-light text-[#333] ${UI}`}>
                Neighbour joining tree using BLOSUM62 from /home/u2362/ass3/tcoffee-I20180125-142519-0469-97612495-pg.clustalw
              </Fit>
            </div>
          </div>
          <div className="flex h-[40px] shrink-0 bg-[#f2f1ef]">
            <Fit w={467} className={`text-[15.5px] leading-[19px] font-light text-[#333] ${UI}`}>
              Loading File: http://www.jalview.org/examples/exampleFile_2_7.jar
            </Fit>
            <div className="ml-[19px] flex h-[20px] flex-1 rounded-[7px] border-b border-white bg-[#e3e2e0] pt-px pl-[532px]">
              <div className="h-[18px] w-[228px] rounded-[6px] border border-[#c4552b] bg-linear-to-b from-[#fb8757] to-[#e86a36]" />
            </div>
          </div>
        </main>
      </div>
    </div>
  );
}
